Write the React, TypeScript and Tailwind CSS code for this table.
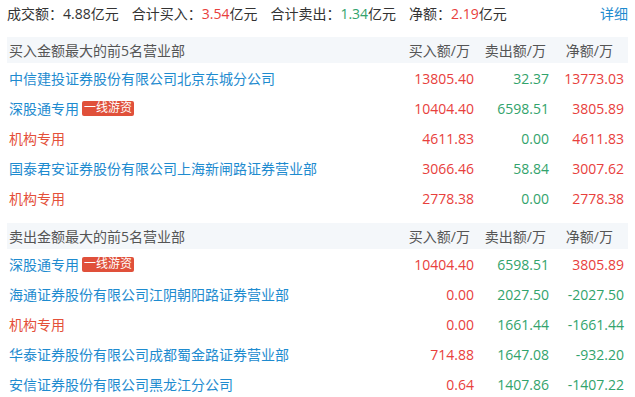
import React from 'react';

type Row = { name: string; tag?: boolean; kind: 'org' | 'link'; buy: string; sell: string; net: string };

const buyRows: Row[] = [
  { name: '中信建投证券股份有限公司北京东城分公司', kind: 'link', buy: '13805.40', sell: '32.37', net: '13773.03' },
  { name: '深股通专用', tag: true, kind: 'link', buy: '10404.40', sell: '6598.51', net: '3805.89' },
  { name: '机构专用', kind: 'org', buy: '4611.83', sell: '0.00', net: '4611.83' },
  { name: '国泰君安证券股份有限公司上海新闸路证券营业部', kind: 'link', buy: '3066.46', sell: '58.84', net: '3007.62' },
  { name: '机构专用', kind: 'org', buy: '2778.38', sell: '0.00', net: '2778.38' },
];

const sellRows: Row[] = [
  { name: '深股通专用', tag: true, kind: 'link', buy: '10404.40', sell: '6598.51', net: '3805.89' },
  { name: '海通证券股份有限公司江阴朝阳路证券营业部', kind: 'link', buy: '0.00', sell: '2027.50', net: '-2027.50' },
  { name: '机构专用', kind: 'org', buy: '0.00', sell: '1661.44', net: '-1661.44' },
  { name: '华泰证券股份有限公司成都蜀金路证券营业部', kind: 'link', buy: '714.88', sell: '1647.08', net: '-932.20' },
  { name: '安信证券股份有限公司黑龙江分公司', kind: 'link', buy: '0.64', sell: '1407.86', net: '-1407.22' },
];

const RED = 'text-[#e8403c]';
const GREEN = 'text-[#32a36c]';

const Section = ({ title, rows }: { title: string; rows: Row[] }) => (
  <div>
    <div className="flex items-center h-[26px] bg-[#f4f7fa] text-[#555] pl-[2px] pr-1">
      <div className="flex-1">{title}</div>
      <div className="w-[75px] text-right pr-1">买入额/万</div>
      <div className="w-[75px] text-right pr-[3px]">卖出额/万</div>
      <div className="w-[75px] text-right pr-[11px]">净额/万</div>
    </div>
    {rows.map((r, i) => (
      <div key={i} className="flex items-center h-[30px] pl-[2px] pr-1">
        <div className="flex-1 flex items-center">
          <span className={r.kind === 'org' ? 'text-[#e4503a]' : 'text-[#1e8bcf]'}>{r.name}</span>
          {r.tag && (
            <span className="ml-[3px] h-[15px] px-[2px] flex items-center bg-[#e0503a] text-white text-[12px] leading-none rounded-[2px]">
              一线游资
            </span>
          )}
        </div>
        <div className={`w-[75px] text-right ${RED}`}>{r.buy}</div>
        <div className={`w-[75px] text-right ${GREEN}`}>{r.sell}</div>
        <div className={`w-[75px] text-right ${r.net.startsWith('-') ? GREEN : RED}`}>{r.net}</div>
      </div>
    ))}
  </div>
);

export default function App() {
  return (
    <div
      className="w-[635px] h-[397px] overflow-hidden bg-white px-[7px] text-[14px] text-[#333]"
      style={{ fontFamily: '"Open Sans", "Noto Sans CJK SC", sans-serif' }}
    >
      <div className="flex items-center h-[26px]">
        <div className="flex-1 flex">
          <span>成交额：4.88亿元</span>
          <span className="ml-[13px]">合计买入：<span className={RED}>3.54</span>亿元</span>
          <span className="ml-[13px]">合计卖出：<span className={GREEN}>1.34</span>亿元</span>
          <span className="ml-[13px]">净额：<span className={RED}>2.19</span>亿元</span>
        </div>
        <span className="text-[#1e8bcf]">详细</span>
      </div>
      <div className="mt-[11px]">
        <Section title="买入金额最大的前5名营业部" rows={buyRows} />
      </div>
      <div className="mt-[10px]">
        <Section title="卖出金额最大的前5名营业部" rows={sellRows} />
      </div>
    </div>
  );
}
